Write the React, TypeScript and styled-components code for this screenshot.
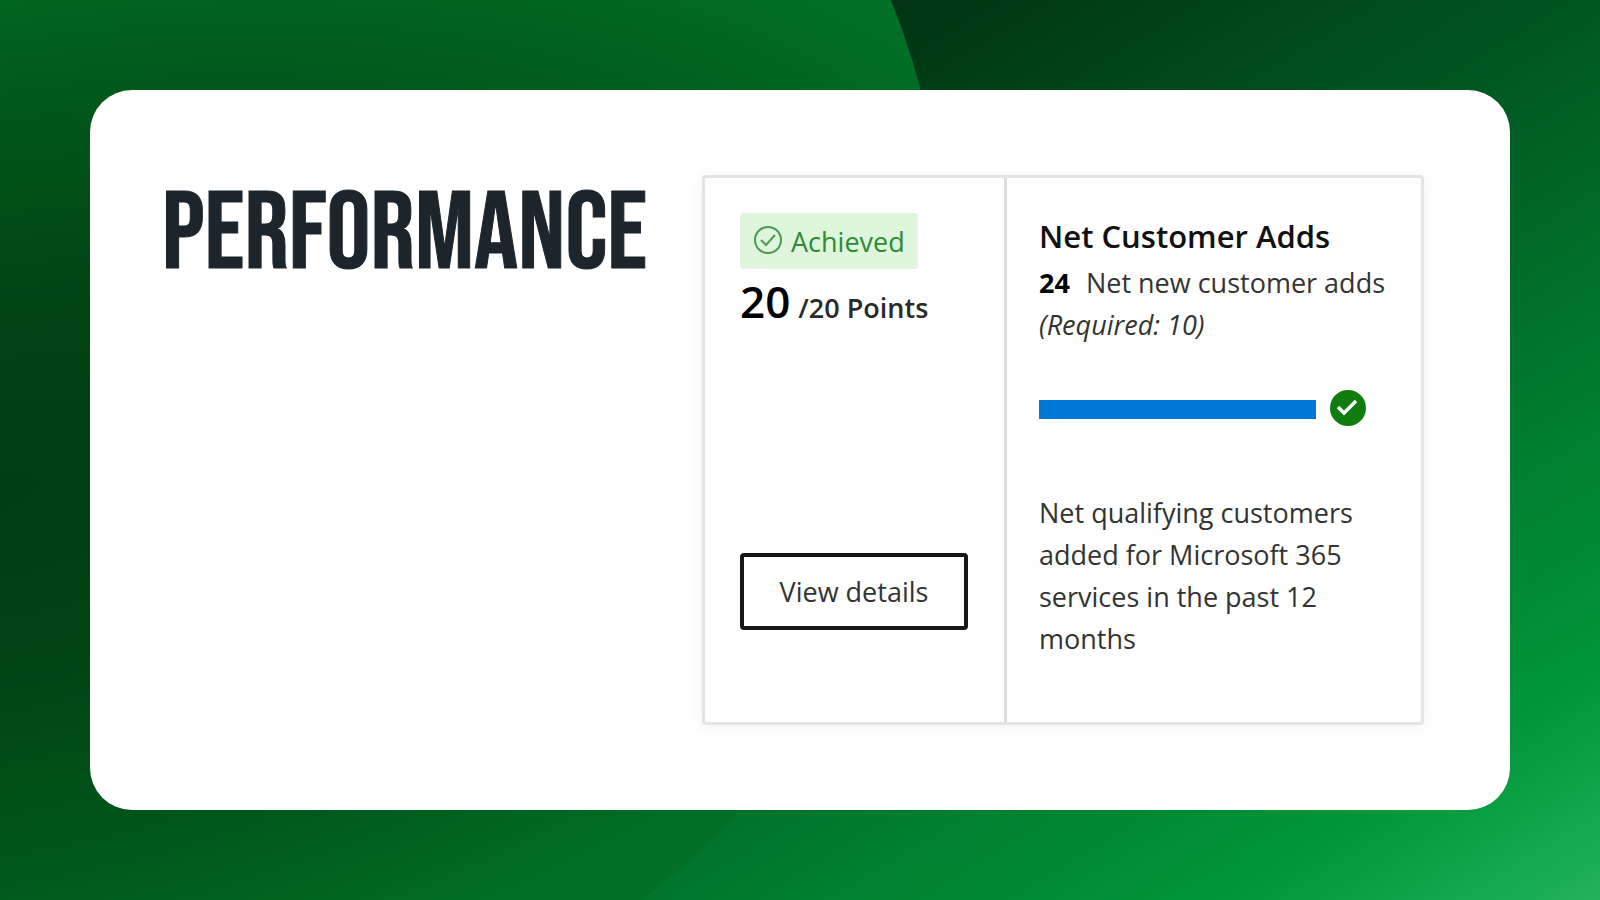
import React from "react";
import styled, { createGlobalStyle } from "styled-components";

const Global = createGlobalStyle`
  *, *::before, *::after { box-sizing: border-box; }
  body { margin: 0; font-family: "Segoe UI", "Open Sans", "Noto Sans", sans-serif; }
  h1, h2, p { margin: 0; }
`;

const Slide = styled.main`
  position: relative;
  min-height: 100vh;
  padding: 90px;
  display: flex;
  overflow: hidden;
  isolation: isolate;
`;

const Backdrop = styled.svg`
  position: absolute;
  inset: 0;
  width: 100%;
  height: 100%;
  z-index: -1;
`;

const Panel = styled.div`
  flex: 1;
  display: flex;
  justify-content: space-between;
  align-items: center;
  padding: 84px 86px 84px 72px;
  border-radius: 42px;
  background: #fff;
`;

const Title = styled.h1`
  align-self: flex-start;
  font-family: "Bebas Neue", "Liberation Sans Narrow", sans-serif;
  font-size: 110px;
  line-height: 122px;
  font-weight: 400;
  color: #1d252c;
  -webkit-text-stroke: 1px #1d252c;
`;

const Card = styled.section`
  display: grid;
  grid-template-columns: 299px 1fr;
  flex: 0 0 722px;
  min-height: 550px;
  border: 3px solid #e5e4e3;
  border-radius: 4px;
  background: #fff;
  box-shadow: 0 2px 14px rgba(0, 0, 0, 0.06);
`;

const Score = styled.div`
  display: flex;
  flex-direction: column;
  align-items: flex-start;
  padding: 35px 36px 92px 35px;
`;

const Badge = styled.span`
  display: flex;
  align-items: center;
  gap: 8px;
  height: 56px;
  padding: 0 13px;
  border-radius: 3px;
  background: #dff6dd;
  color: #2c8c34;
  font-size: 27px;
`;

const Points = styled.p`
  display: flex;
  align-items: baseline;
  gap: 8px;
  margin-top: 2px;
  font-size: 27px;
  line-height: 60px;
  font-weight: 600;
  color: #2a2a2a;
`;

const Earned = styled.span`
  font-size: 44px;
  color: #000;
`;

const DetailsButton = styled.button`
  width: 100%;
  height: 77px;
  margin-top: auto;
  border: 4px solid #171717;
  border-radius: 4px;
  background: #fff;
  font: inherit;
  font-size: 27px;
  color: #333;
`;

const Metric = styled.div`
  padding: 34px 28px 34px 32px;
  border-left: 3px solid #dcdcdc;
  font-size: 27px;
  line-height: 42px;
  color: #333;
`;

const MetricTitle = styled.h2`
  margin-bottom: 2px;
  font-size: 31px;
  line-height: 48px;
  font-weight: 600;
  color: #111;
  white-space: nowrap;
`;

const Count = styled.strong`
  margin-right: 16px;
  font-weight: 700;
  color: #000;
`;

const Line = styled.p`
  white-space: nowrap;
`;

const ProgressRow = styled.div`
  display: flex;
  align-items: center;
  gap: 14px;
  margin: 44px 0 64px;
`;

const Track = styled.div`
  width: 277px;
  height: 19px;
  background: #0078d8;
`;

const Circles = () => (
  <Backdrop viewBox="0 0 1600 900" preserveAspectRatio="none" aria-hidden="true">
    <defs>
      <linearGradient id="base" gradientUnits="userSpaceOnUse" x1="890" y1="0" x2="1482" y2="973">
        <stop offset="0" stopColor="#003312" />
        <stop offset="0.32" stopColor="#005620" />
        <stop offset="0.6" stopColor="#007a2e" />
        <stop offset="0.83" stopColor="#009639" />
        <stop offset="1" stopColor="#22b35c" />
      </linearGradient>
      <radialGradient
        id="disc"
        gradientUnits="userSpaceOnUse"
        cx="0"
        cy="0"
        r="1"
        gradientTransform="translate(0 490) rotate(-12) scale(1120 550)"
      >
        <stop offset="0" stopColor="#003e12" />
        <stop offset="0.35" stopColor="#004515" />
        <stop offset="0.7" stopColor="#00581c" />
        <stop offset="0.88" stopColor="#006620" />
        <stop offset="1" stopColor="#007026" />
      </radialGradient>
    </defs>
    <rect width="1600" height="900" fill="url(#base)" />
    <circle cx="175" cy="286" r="771" fill="url(#disc)" />
  </Backdrop>
);

export default function App() {
  return (
    <>
      <Global />
      <Slide>
        <Circles />
        <Panel>
          <Title>PERFORMANCE</Title>
          <Card>
            <Score>
              <Badge>
                <svg width="30" height="30" viewBox="0 0 30 30" fill="none" stroke="#4b9a50" strokeWidth="2" aria-hidden="true">
                  <circle cx="15" cy="14" r="13" />
                  <path d="M8 14l5 5 9-10" />
                </svg>
                Achieved
              </Badge>
              <Points><Earned>20</Earned>/20 Points</Points>
              <DetailsButton type="button">View details</DetailsButton>
            </Score>
            <Metric>
              <MetricTitle>Net Customer Adds</MetricTitle>
              <Line><Count>24</Count>Net new customer adds</Line>
              <Line><em>(Required: 10)</em></Line>
              <ProgressRow>
                <Track role="progressbar" aria-label="Net customer adds" aria-valuenow={100} />
                <svg width="38" height="38" viewBox="0 0 38 38" fill="none" aria-hidden="true">
                  <circle cx="18" cy="18" r="18" fill="#107c10" />
                  <path d="M8 17l6 6 12-12" stroke="#fff" strokeWidth="3.4" />
                </svg>
              </ProgressRow>
              <p>Net qualifying customers added for Microsoft 365 services in the past 12 months</p>
            </Metric>
          </Card>
        </Panel>
      </Slide>
    </>
  );
}
